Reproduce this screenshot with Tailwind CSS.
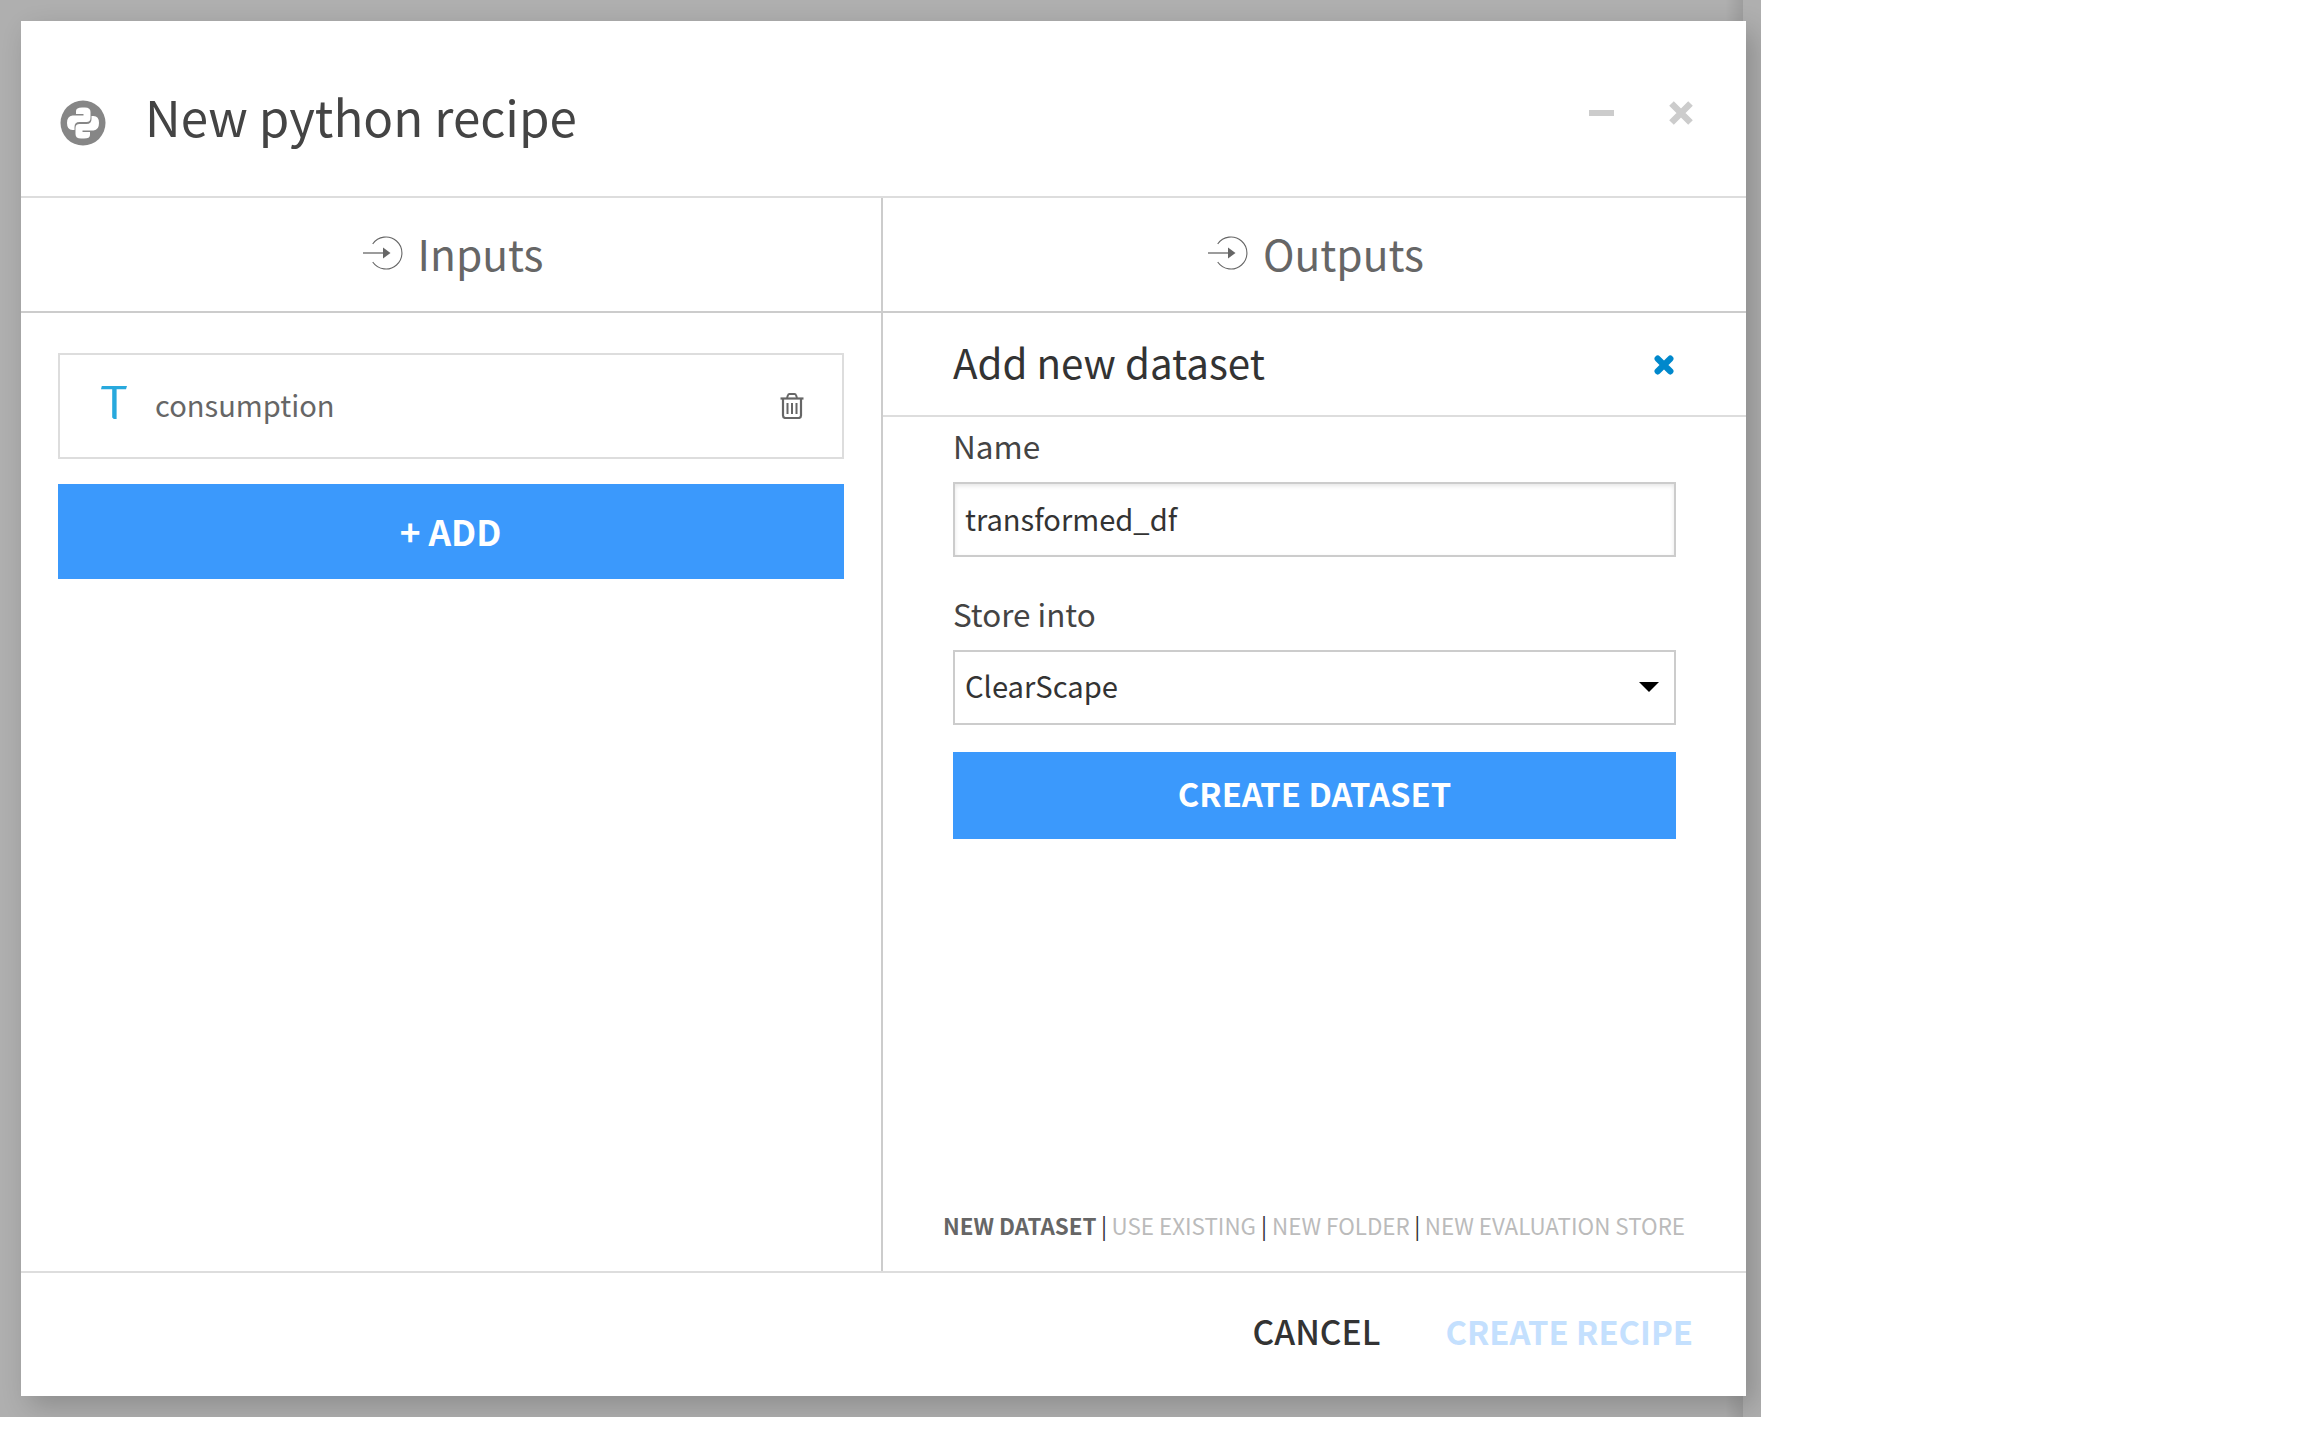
<!DOCTYPE html>
<html lang="en">
<head>
<meta charset="utf-8">
<title>New python recipe</title>
<script src="https://cdn.jsdelivr.net/npm/@tailwindcss/browser@4"></script>
</head>
<body class="bg-white font-['Noto_Sans_CJK_SC','Source_Sans_Pro',sans-serif] text-[#444]">
<div class="relative h-[1417px] w-[1761px] overflow-hidden bg-[#afafaf] pt-[21px] pl-[21px]">
  <!-- edge shade of the page behind the modal -->
  <div class="absolute top-0 left-[1725px] h-full w-[18px] bg-linear-to-r from-black/0 to-black/10"></div>

  <div class="relative flex h-[1375px] w-[1725px] flex-col bg-white shadow-[8px_10px_26px_rgba(0,0,0,0.2)]">
    <header class="flex h-[177px] shrink-0 items-center border-b-2 border-[#ddd] pl-[39px]">
      <svg class="mt-[28px] h-[46px] w-[46px]" viewBox="0 0 46 46">
        <circle cx="23" cy="23" r="22.5" fill="#868686"/>
        <path d="M22 7.500h3q5.500 0 5.500 4.500v6q0 4-4 4h-7q-5 0-5 5v3h-2q-5.500 0-5.500-7t5.500-7.500h11v-1.500h-7.500v-3q0-3.500 6-3.500z" fill="#fff"/>
        <path d="M24 38.500h-3q-5.500 0-5.500-4.500v-6q0-4 4-4h7q5 0 5-5v-3h2q5.500 0 5.500 7t-5.500 7.500h-11v1.500h7.500v3q0 3.500-6 3.500z" fill="#fff"/>
      </svg>
      <h1 class="ml-[39px] grow pt-[14px] text-[49.300px] leading-none">New python recipe</h1>
      <svg class="mt-[9px] h-6 w-[25px]" viewBox="0 0 25 24"><path d="M0 12h25" stroke="#ccc" stroke-width="6"/></svg>
      <svg class="mt-[8px] mr-[53px] ml-[55px] h-6 w-6" viewBox="0 0 24 24"><path d="M2.500 2.500l19 19M21.500 2.500l-19 19" stroke="#ccc" stroke-width="6.500"/></svg>
    </header>

    <main class="flex min-h-0 grow">
      <section class="flex w-[862px] flex-col border-r-2 border-[#ccc]">
        <h2 class="flex h-[115px] shrink-0 items-center justify-center gap-[15px] border-b-2 border-[#ccc] pb-[3px] pl-[4px] text-[42.500px] leading-none text-[#666]">
          <svg class="h-[34px] w-[40px]" viewBox="0 0 40 34"><path d="M9.700 8A16 16 0 1 1 9.700 26" fill="none" stroke="#666" stroke-width="1.100"/><path d="M0 17h22" stroke="#666" stroke-width="1.300"/><path d="M20 11.500v11l7.500-5.500z" fill="#666"/></svg>
          <span>Inputs</span>
        </h2>
        <div class="flex flex-col gap-[25px] pt-[40px] pl-[37px]">
          <div class="flex h-[106px] w-[786px] items-center border-2 border-[#ddd] pl-[41px]">
            <svg class="mb-[7px] h-[33px] w-[26px]" viewBox="0 0 26 33"><path d="M.800 0H26l-1 3.200H15.600V33h-2.800l-1.600-1.500V3.200H0z" fill="#28a9dd"/></svg>
            <span class="ml-[28px] grow pb-[2px] text-[29.100px] leading-none text-[#666]">consumption</span>
            <svg class="mr-[38px] h-[26px] w-[24px]" viewBox="0 0 24 26" fill="none" stroke="#666"><path d="M.500 5.500h23" stroke-width="2.200"/><path d="M7 5L8 2q.300-1 1.500-1h5q1.200 0 1.500 1l1 3" stroke-width="2"/><path d="M3 6v16.500q0 2.500 2.500 2.500h13q2.500 0 2.500-2.500V6" stroke-width="2.200"/><path d="M7.500 10v11M12 10v11M16.500 10v11" stroke-width="2"/></svg>
          </div>
          <button class="h-[95px] w-[786px] bg-[#3b99fc] pr-[1px] pb-[2px] text-[35.200px] leading-none font-bold text-white">+ ADD</button>
        </div>
      </section>

      <section class="flex w-[863px] flex-col">
        <h2 class="flex h-[115px] shrink-0 items-center justify-center gap-[15px] border-b-2 border-[#ccc] pb-[3px] pl-[3px] text-[42.500px] leading-none text-[#666]">
          <svg class="h-[34px] w-[40px]" viewBox="0 0 40 34"><path d="M9.700 8A16 16 0 1 1 9.700 26" fill="none" stroke="#666" stroke-width="1.100"/><path d="M0 17h22" stroke="#666" stroke-width="1.300"/><path d="M20 11.500v11l7.500-5.500z" fill="#666"/></svg>
          <span>Outputs</span>
        </h2>
        <div class="flex h-[104px] shrink-0 items-center justify-between border-b-2 border-[#ddd] pr-[72px] pl-[70px]">
          <h3 class="pb-[3px] text-[40.300px] leading-none text-[#333]">Add new dataset</h3>
          <svg class="mt-[1px] h-5 w-5" viewBox="0 0 20 20"><path d="M3.700 3.700l12.600 12.600M16.300 3.700L3.700 16.300" stroke="#0088cc" stroke-width="6.300" stroke-linecap="round"/></svg>
        </div>
        <div class="flex grow flex-col pr-[70px] pl-[70px]">
          <label class="flex h-[65px] items-center pb-[8px] text-[31.500px] leading-none">Name</label>
          <div class="flex h-[75px] items-center border-2 border-[#ccc] pb-[2px] pl-[10px] text-[29.100px] leading-none text-[#333] shadow-[inset_0_2px_4px_rgba(0,0,0,0.1)]">transformed_df</div>
          <label class="flex h-[93px] items-center pt-[20px] text-[31.400px] leading-none">Store into</label>
          <div class="flex h-[75px] items-center justify-between border-2 border-[#ccc] pr-[15px] pl-[10px] text-[29.200px] leading-none text-[#333]">
            <span class="pb-[4px]">ClearScape</span>
            <svg class="mb-[1px] h-[10px] w-5" viewBox="0 0 20 10"><path d="M0 0h20L10 10z"/></svg>
          </div>
          <button class="mt-[27px] h-[87px] bg-[#3b99fc] pb-[4px] text-[32.800px] leading-none font-bold text-white">CREATE DATASET</button>
        </div>
        <nav class="flex h-[65px] items-center pb-[27px] pl-[60px] text-[22.400px] leading-none whitespace-nowrap text-[#bbb]">
          <span class="font-bold text-[#666]">NEW DATASET</span>
          <span class="w-[15px] text-center text-[#333]">|</span>
          <span>USE EXISTING</span>
          <span class="w-[16px] text-center text-[#333]">|</span>
          <span>NEW FOLDER</span>
          <span class="w-[15px] text-center text-[#333]">|</span>
          <span>NEW EVALUATION STORE</span>
        </nav>
      </section>
    </main>

    <footer class="flex h-[125px] shrink-0 items-center justify-end gap-[65px] border-t-2 border-[#ddd] pr-[53px] pb-[8px] leading-none">
      <button class="text-[33.600px] leading-none font-medium text-[#333]">CANCEL</button>
      <button class="pt-[1px] text-[32.800px] leading-none font-bold text-[#c4e0fe]">CREATE RECIPE</button>
    </footer>
  </div>
</div>
</body>
</html>
